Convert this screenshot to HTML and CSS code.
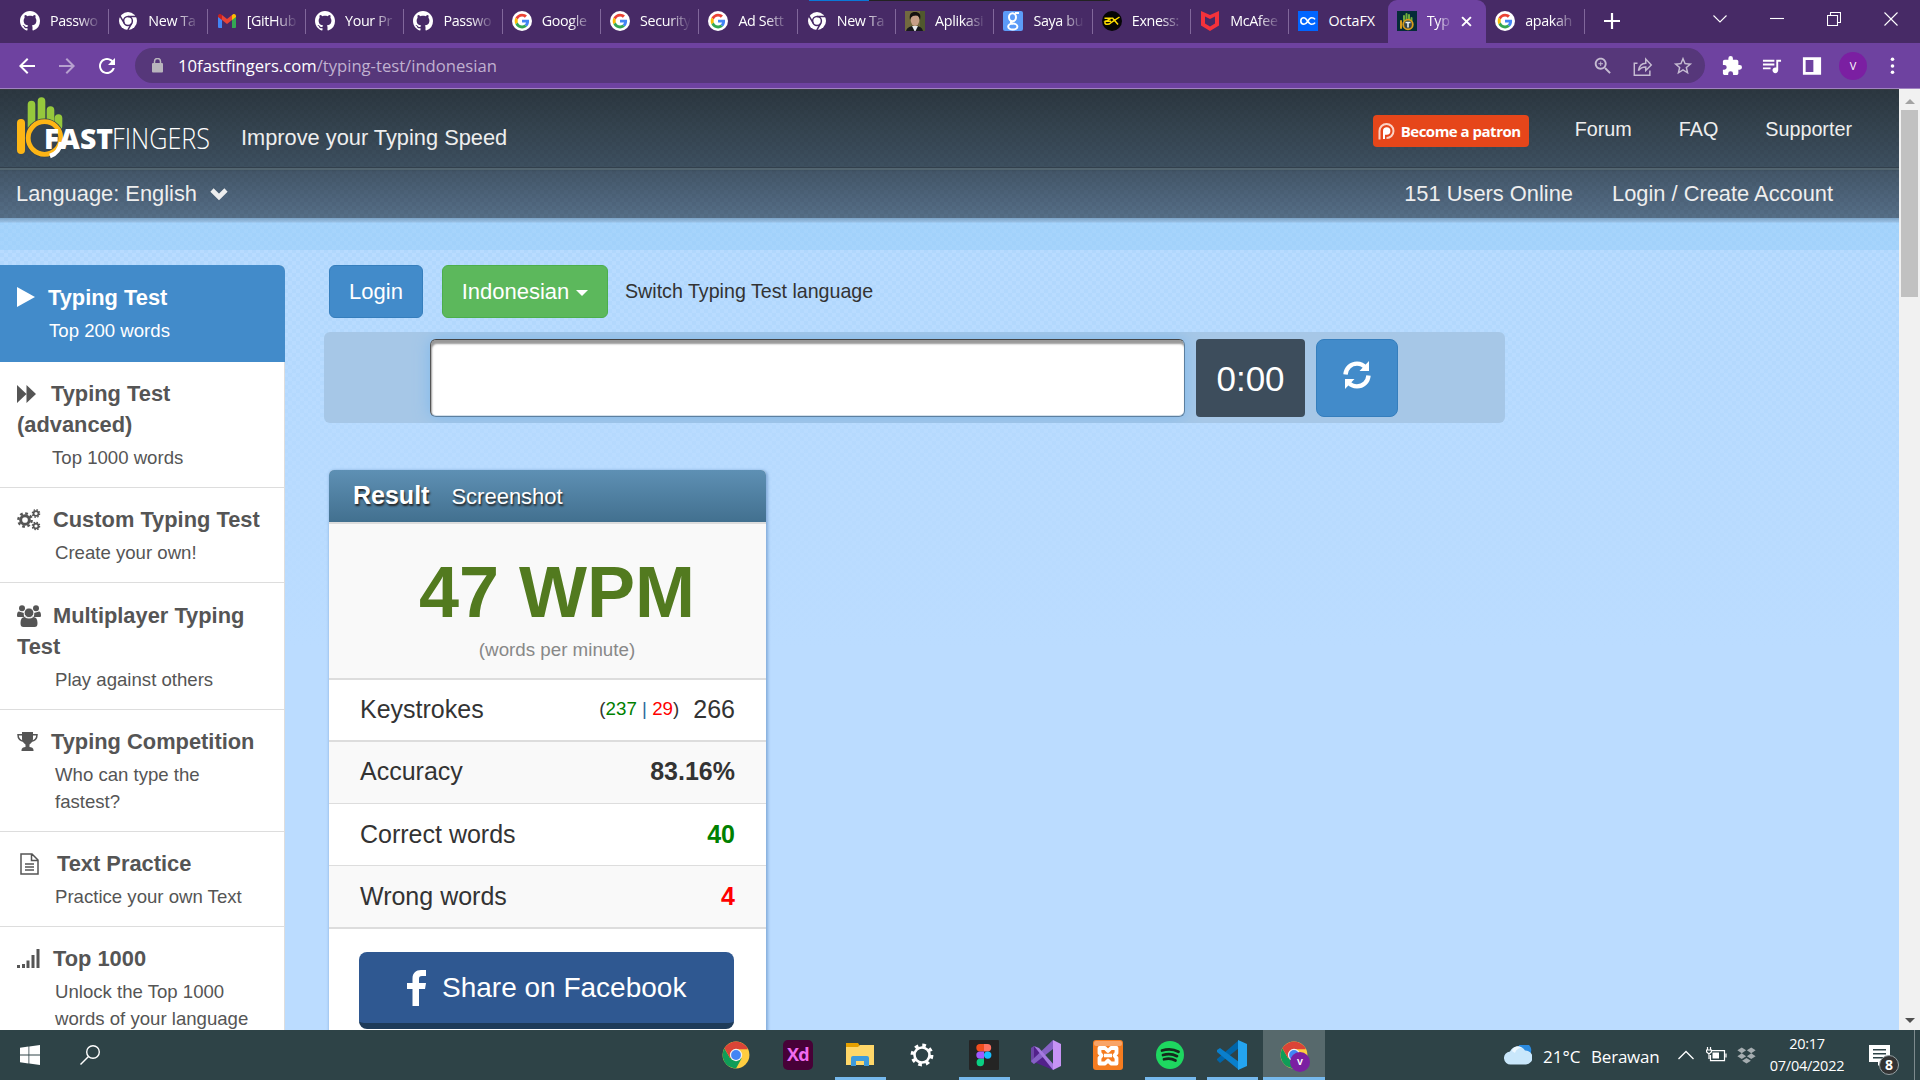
FILE: index.html
```html
<!DOCTYPE html>
<html lang="en">
<head>
<meta charset="utf-8">
<title>Typing Test</title>
<link rel="stylesheet" href="styles.css">
</head>
<body>
<svg class="defs" width="0" height="0">
  <symbol id="github" viewBox="0 0 16 16"><path fill="#fff" d="M8 0C3.58 0 0 3.58 0 8c0 3.54 2.29 6.53 5.47 7.59.4.07.55-.17.55-.38 0-.19-.01-.82-.01-1.49-2.01.37-2.53-.49-2.69-.94-.09-.23-.48-.94-.82-1.13-.28-.15-.68-.52-.01-.53.63-.01 1.08.58 1.23.82.72 1.21 1.87.87 2.33.66.07-.52.28-.87.51-1.07-1.78-.2-3.64-.89-3.64-3.95 0-.87.31-1.59.82-2.15-.08-.2-.36-1.02.08-2.12 0 0 .67-.21 2.2.82.64-.18 1.32-.27 2-.27.68 0 1.36.09 2 .27 1.53-1.04 2.2-.82 2.2-.82.44 1.1.16 1.92.08 2.12.51.56.82 1.27.82 2.15 0 3.07-1.87 3.75-3.65 3.95.29.25.54.73.54 1.48 0 1.07-.01 1.93-.01 2.2 0 .21.15.46.55.38A8.013 8.013 0 0 0 16 8c0-4.42-3.58-8-8-8z"/></symbol>
  <symbol id="chrome-mono" viewBox="0 0 20 20"><circle cx="10" cy="10" r="9" fill="#fff"/><g fill="none" stroke="#472a66" stroke-width="1.500"><circle cx="10" cy="10" r="4.400"/><path d="M10 5.600h8.500M6.200 12.200L2 4.900M13.800 12.200L9.800 19.200"/></g></symbol>
  <symbol id="chrome" viewBox="0 0 48 48"><circle cx="24" cy="24" r="23" fill="#ffcd40"/><path fill="#db4437" d="M24 24L4.100 12.500A23 23 0 0 1 43.900 12.500L43.900 14H24z"/><path fill="#0f9d58" d="M24 24L14 29.500 4.100 12.500A23 23 0 0 0 24 47L33.500 30z"/><path fill="#db4437" d="M4.100 12.500L14 29.500 24 24V13.500z"/><circle cx="24" cy="24" r="10.600" fill="#f1f1f1"/><circle cx="24" cy="24" r="8.400" fill="#4285f4"/></symbol>
  <symbol id="gmail" viewBox="0 0 20 20"><path fill="#4285f4" d="M1 5l4 3v9H2a1 1 0 0 1-1-1z"/><path fill="#34a853" d="M15 8l4-3v11a1 1 0 0 1-1 1h-3z"/><path fill="#ea4335" d="M5 4l5 4 5-4v5l-5 4-5-4z"/><path fill="#c5221f" d="M1 5c0-2 2-2.600 3.200-1.600L5 4v5L1 6z"/><path fill="#fbbc04" d="M19 5c0-2-2-2.600-3.200-1.600L15 4v5l4-3z"/></symbol>
  <symbol id="google" viewBox="0 0 60 60"><circle cx="30" cy="30" r="30" fill="#fff"/><g transform="translate(8 8) scale(.92)"><path fill="#EA4335" d="M24 9.500c3.540 0 6.710 1.220 9.210 3.600l6.850-6.850C35.900 2.380 30.470 0 24 0 14.620 0 6.510 5.380 2.560 13.220l7.980 6.190C12.430 13.720 17.740 9.500 24 9.500z"/><path fill="#4285F4" d="M46.980 24.550c0-1.570-.150-3.090-.380-4.550H24v9.020h12.940c-.580 2.960-2.260 5.480-4.780 7.180l7.730 6c4.510-4.180 7.090-10.360 7.090-17.650z"/><path fill="#FBBC05" d="M10.530 28.590c-.480-1.450-.760-2.990-.760-4.590s.270-3.140.760-4.590l-7.980-6.190C.920 16.460 0 20.120 0 24c0 3.880.920 7.540 2.560 10.780l7.970-6.190z"/><path fill="#34A853" d="M24 48c6.480 0 11.930-2.130 15.890-5.810l-7.730-6c-2.150 1.450-4.920 2.300-8.160 2.300-6.260 0-11.570-4.220-13.470-9.910l-7.980 6.190C6.510 42.620 14.620 48 24 48z"/></g></symbol>
  <symbol id="portrait" viewBox="0 0 20 20"><path fill="#72693f" d="M0 0h20v20H0z"/><path fill="#50582e" d="M15 0h5v20h-5z"/><path fill="#17181c" d="M1 20c1-4 5-5 9-5s7 1 8 5z"/><path fill="#e6e9ec" d="M7 15h6l-2.500 5h-1z"/><ellipse cx="10" cy="9" rx="4.300" ry="6" fill="#c8a088"/><path fill="#15120f" d="M5 9C4 3 6 1 10 1s6.500 2 5 8c-1-4-2-4-4-4.500C8 5 6 5 5 9z"/></symbol>
  <symbol id="gold-g" viewBox="0 0 20 20"><rect width="20" height="20" rx="2" fill="#5c9bf8"/><g fill="none" stroke="#fff" stroke-width="2"><ellipse cx="9.500" cy="6.200" rx="3.500" ry="4"/><ellipse cx="9.800" cy="15.600" rx="4.600" ry="3"/><path d="M12 2h4M9 10c-2 1-1 2 1 2.800"/></g></symbol>
  <symbol id="exness" viewBox="0 0 20 20"><circle cx="10" cy="10" r="10" fill="#050505"/><path fill="none" stroke="#ffde02" stroke-width="1.500" d="M2.500 7.300h6.500L4 10.300h5M3.500 9.700c-2.500 5 3.500 4 5.500 2l8.500-5.700M10.500 7l5.500 6.500"/></symbol>
  <symbol id="mcafee" viewBox="0 0 20 20"><path fill="#f5323b" fill-rule="evenodd" d="M1 0l9 4 9-4v14.500L10 20l-9-5.500zM5 5.500v7l5 3 5-3v-7l-5 2.500z"/></symbol>
  <symbol id="octa" viewBox="0 0 20 20"><path fill="#0165ff" d="M0 0h20v20H0z"/><path fill="none" stroke="#fff" stroke-width="1.600" d="M10 10c-2 3-3 3.200-4 3.200a3.200 3.200 0 0 1 0-6.400c3 0 4 6.400 7.500 6.400 1.600 0 3-.700 3.500-1.600M10 10c1.500-3 2.500-3.200 3.500-3.200 1.600 0 3 .700 3.500 1.600"/></symbol>
  <symbol id="tenff" viewBox="0 0 20 20"><path fill="#052c38" d="M0 0h20v20H0z"/><path fill="none" stroke="#6fae3c" stroke-width="2" stroke-linecap="round" d="M7 9V5M9.500 8V3M12 9V4M14.500 10V7"/><path fill="none" stroke="#d99c1a" stroke-width="2" stroke-linecap="round" d="M4 10v7"/><circle cx="11" cy="13.500" r="4.800" fill="#34454a" stroke="#d99c1a" stroke-width="1.800"/><path fill="none" stroke="#e8eef0" stroke-width="1.600" d="M8.500 11.500h5M11 11.500v5"/></symbol>
  <symbol id="cog" viewBox="0 0 24 24"><circle cx="12" cy="12" r="6.500" fill="none" stroke="currentColor" stroke-width="4.500"/><circle cx="12" cy="12" r="10" fill="none" stroke="currentColor" stroke-width="3.600" stroke-dasharray="4.100 3.754"/></symbol>
</svg>

<div class="browser">
  <div class="tabs">
    <div class="load-bar"></div>
    <div class="tab"><svg><use href="#github"/></svg><span>Passwo</span></div>
    <div class="tab"><svg><use href="#chrome-mono"/></svg><span>New Ta</span></div>
    <div class="tab"><svg><use href="#gmail"/></svg><span>[GitHub</span></div>
    <div class="tab"><svg><use href="#github"/></svg><span>Your Pr</span></div>
    <div class="tab"><svg><use href="#github"/></svg><span>Passwo</span></div>
    <div class="tab"><svg><use href="#google"/></svg><span>Google</span></div>
    <div class="tab"><svg><use href="#google"/></svg><span>Security</span></div>
    <div class="tab"><svg><use href="#google"/></svg><span>Ad Sett</span></div>
    <div class="tab"><svg><use href="#chrome-mono"/></svg><span>New Ta</span></div>
    <div class="tab"><svg><use href="#portrait"/></svg><span>Aplikasi</span></div>
    <div class="tab"><svg><use href="#gold-g"/></svg><span>Saya bu</span></div>
    <div class="tab"><svg><use href="#exness"/></svg><span>Exness:</span></div>
    <div class="tab"><svg><use href="#mcafee"/></svg><span>McAfee</span></div>
    <div class="tab last"><svg><use href="#octa"/></svg><span class="solid">OctaFX</span></div>
    <div class="tab active"><svg><use href="#tenff"/></svg><span>Typ</span>
      <svg class="close" viewBox="0 0 10 10"><path d="M1 1l8 8M9 1L1 9" stroke="#fff" stroke-width="1.800"/></svg></div>
    <div class="tab"><svg><use href="#google"/></svg><span>apakah</span></div>
    <svg class="plus" viewBox="0 0 16 16"><path d="M8 0v16M0 8h16" stroke="#fff" stroke-width="2.200"/></svg>
    <div class="window-buttons">
      <svg width="14" height="8" viewBox="0 0 14 8"><path d="M.5.5L7 7 13.500.5"/></svg>
      <svg width="14" height="8" viewBox="0 0 14 8"><path d="M0 3.500h14"/></svg>
      <svg width="14" height="14" viewBox="0 0 14 14"><path d="M.5 3.500h10v10H.5zM3.500 3.500v-3h10v10h-3"/></svg>
      <svg width="14" height="14" viewBox="0 0 14 14"><path d="M.5.5l13 13M13.500.5l-13 13"/></svg>
    </div>
  </div>
  <div class="toolbar">
    <svg class="nav-icon" viewBox="0 0 24 24"><path fill="#fff" d="M20 11H7.830l5.590-5.590L12 4l-8 8 8 8 1.410-1.410L7.830 13H20v-2z"/></svg>
    <svg class="nav-icon dim" viewBox="0 0 24 24"><path fill="#fff" d="M12 4l-1.410 1.410L16.170 11H4v2h12.170l-5.580 5.590L12 20l8-8z"/></svg>
    <svg class="nav-icon" viewBox="0 0 24 24"><path fill="#fff" d="M17.650 6.350C16.200 4.900 14.210 4 12 4c-4.420 0-7.990 3.580-7.990 8s3.570 8 7.990 8c3.730 0 6.840-2.550 7.730-6h-2.080c-.820 2.330-3.040 4-5.650 4-3.310 0-6-2.690-6-6s2.690-6 6-6c1.660 0 3.140.690 4.220 1.780L13 11h7V4l-2.350 2.350z"/></svg>
    <div class="address">
      <svg class="lock" viewBox="0 0 11 15"><rect y="5" width="11" height="9.500" rx="1" fill="#b9b5bd"/><path d="M2.500 6V3.500a3 3 0 0 1 6 0V6" fill="none" stroke="#b9b5bd" stroke-width="1.500"/></svg>
      <div class="url"><b>10fastfingers.com</b>/typing-test/indonesian</div>
      <svg class="omni" viewBox="0 0 24 24"><path fill="#c6bcd2" d="M15.500 14h-.790l-.280-.270C15.410 12.590 16 11.110 16 9.500 16 5.910 13.090 3 9.500 3S3 5.910 3 9.500 5.910 16 9.500 16c1.610 0 3.090-.590 4.230-1.570l.270.280v.790l5 4.990L20.490 19l-4.990-5zm-6 0C7.010 14 5 11.990 5 9.500S7.010 5 9.500 5 14 7.010 14 9.500 11.990 14 9.500 14zM10 7H9v2H7v1h2v2h1v-2h2V9h-2z"/></svg>
      <svg class="omni" viewBox="0 0 24 24"><path fill="none" stroke="#c6bcd2" stroke-width="1.600" d="M6 9H2.500v13h17v-5M7 17c1-6 4-8 8-8V4.500l6 6.500-6 6v-4c-4 0-6 1-8 4z"/></svg>
      <svg class="omni" viewBox="0 0 24 24"><path fill="#c6bcd2" d="M22 9.240l-7.190-.620L12 2 9.190 8.630 2 9.240l5.460 4.730L5.820 21 12 17.270 18.180 21l-1.630-7.030L22 9.240zM12 15.400l-3.760 2.270 1-4.280-3.320-2.880 4.380-.380L12 6.100l1.710 4.040 4.380.380-3.320 2.880 1 4.280L12 15.400z"/></svg>
    </div>
    <svg class="ext" viewBox="1 1 22 22"><path fill="#fff" d="M20.500 11H19V7c0-1.100-.900-2-2-2h-4V3.500a2.500 2.500 0 0 0-5 0V5H4c-1.100 0-2 .900-2 2v3.800h1.500a2.700 2.700 0 0 1 0 5.400H2V20c0 1.100.900 2 2 2h3.800v-1.500a2.700 2.700 0 0 1 5.400 0V22H17c1.100 0 2-.900 2-2v-4h1.500a2.500 2.500 0 0 0 0-5z"/></svg>
    <svg class="ext" viewBox="2 3 21 19"><path fill="#fff" d="M15 6H3v2h12V6zm0 4H3v2h12v-2zM3 16h8v-2H3v2zM17 6v8.180c-.310-.110-.650-.180-1-.180-1.660 0-3 1.340-3 3s1.340 3 3 3 3-1.340 3-3V8h3V6h-5z"/></svg>
    <svg class="ext" viewBox="1 2 22 21"><path fill="#fff" fill-rule="evenodd" d="M2 3h20v19H2zM5 6v13h8.500V6z"/></svg>
    <div class="avatar">V</div>
    <svg class="dots" viewBox="0 0 4 20"><g fill="#fff"><circle cx="2" cy="2.500" r="2"/><circle cx="2" cy="10" r="2"/><circle cx="2" cy="17" r="2"/></g></svg>
  </div>
</div>

<div class="viewport">
  <div class="page">
    <header class="top">
      <div class="brand-row">
        <svg class="logo" width="200" height="68" viewBox="12 92 200 68">
          <g stroke="#96c83c" stroke-width="7.600" stroke-linecap="round"><path d="M31.500 104.500V127M41.500 101V122M50.500 110v12M58.500 118v8"/></g>
          <circle cx="44.500" cy="138" r="19.500" fill="#34434f"/>
          <path d="M21 123v27" stroke="#fdb515" stroke-width="8" stroke-linecap="round"/>
          <circle cx="44.500" cy="138" r="16.300" fill="none" stroke="#fdb515" stroke-width="4.800"/>
          <path d="M61 142c-1 7-5 12-11 14" fill="none" stroke="#fff" stroke-width="4.500"/>
          <text x="44" y="148.500" class="fast" textLength="69" lengthAdjust="spacingAndGlyphs">FAST</text>
          <text x="112" y="148.500" class="fingers" textLength="98" lengthAdjust="spacingAndGlyphs">FINGERS</text>
        </svg>
        <div class="slogan">Improve your Typing Speed</div>
        <div class="patron"><svg width="17" height="18" viewBox="0 0 17 18"><path d="M1.500 17.500V9a7 7 0 1 1 7 7" fill="none" stroke="#fbd3c6" stroke-width="2"/><path d="M5 17V9a3.700 3.700 0 1 1 3.700 3.700H7V17z" fill="#fff"/></svg>Become a patron</div>
        <nav class="links"><a>Forum</a><a>FAQ</a><a>Supporter</a></nav>
      </div>
      <div class="user-row">
        <div class="language">Language: English<svg width="18" height="14" viewBox="0 0 18 14"><path d="M2 3l7 7 7-7" fill="none" stroke="#eee" stroke-width="4.600"/></svg></div>
        <div class="users">151 Users Online</div>
        <div>Login / Create Account</div>
      </div>
    </header>
    <div class="strip"></div>
    <div class="columns">
      <aside class="side">
        <div class="item current"><h4><svg width="18" height="20" viewBox="0 0 18 20"><path fill="#fff" d="M0 0l18 10L0 20z"/></svg>Typing Test</h4><p>Top 200 words</p></div>
        <div class="item h126"><h4><svg width="19" height="18" viewBox="0 0 19 18"><path fill="#555" d="M0 0l9.500 9V0l9.500 9-9.500 9V9L0 18z"/></svg>Typing Test (advanced)</h4><p>Top 1000 words</p></div>
        <div class="item h95"><h4><svg width="24" height="22" viewBox="0 0 24 22" color="#555"><use href="#cog" x="0" y="3" width="16" height="16"/><use href="#cog" x="14.500" y="0" width="9" height="9"/><use href="#cog" x="14.500" y="12.500" width="9" height="9"/></svg>Custom Typing Test</h4><p>Create your own!</p></div>
        <div class="item h127"><h4><svg width="24" height="22" viewBox="0 0 24 22"><g fill="#555"><circle cx="5" cy="3.200" r="3"/><circle cx="19" cy="3.200" r="3"/><path d="M0 11c0-3 .500-4.500 2-4.500L7 8c-.500 1-.200 3 .500 4H2c-1.500 0-2-.400-2-1zM24 11c0-3-.500-4.500-2-4.500L17 8c.500 1 .200 3-.500 4H22c1.500 0 2-.400 2-1z"/><circle cx="12" cy="7.800" r="4.800" stroke="#fff" stroke-width=".8"/><path d="M3.500 18c0-4 1.500-6 4-6 3 2 6 2 9 0 2.500 0 4 2 4 6 0 3-1 4-3 4h-11c-2 0-3-1-3-4z"/></g></svg>Multiplayer Typing Test</h4><p>Play against others</p></div>
        <div class="item h122"><h4><svg width="21" height="19" viewBox="0 0 21 19"><path fill="#555" d="M5 0h11v7c0 3-2 4-3.500 5.500V15c2 0 4 1 4 3v1h-12v-1c0-2 2-3 4-3v-2.500C7 11 5 10 5 7z"/><path fill="none" stroke="#555" stroke-width="1.500" d="M5 2.800H1c0 4 2 6 6 6.500M16 2.800h4c0 4-2 6-6 6.500"/></svg>Typing Competition</h4><p>Who can type the fastest?</p></div>
        <div class="item h95"><h4 class="text-practice"><svg width="19" height="22" viewBox="0 0 19 22"><path fill="none" stroke="#555" stroke-width="1.500" d="M1 1h11l6 6v14H1zM11.500 1v6.500H18M5 11h9M5 14h9M5 17h9"/></svg>Text Practice</h4><p>Practice your own Text</p></div>
        <div class="item"><h4><svg width="23" height="19" viewBox="0 0 23 19"><path fill="#555" d="M0 16h3v3H0zM5 15h3v4H5zM9.500 11.500h3V19h-3zM14.500 6h3v13h-3zM19.500 0h3v19h-3z"/></svg>Top 1000</h4><p>Unlock the Top 1000 words of your language</p></div>
      </aside>
      <main class="main">
        <div class="actions">
          <button class="btn blue">Login</button>
          <button class="btn green">Indonesian<i class="caret"></i></button>
          <span class="switch">Switch Typing Test language</span>
        </div>
        <div class="input-row">
          <div class="type-field"></div>
          <div class="timer">0:00</div>
          <button class="reload"><svg width="28" height="28" viewBox="0 0 28 28"><path fill="none" stroke="#fff" stroke-width="4.400" d="M2.500 13.500C3 7 8 2.600 14 2.600c3.500 0 6.500 1.500 8.500 4M25.500 14.500C25 21 20 25.400 14 25.400c-3.500 0-6.500-1.500-8.500-4"/><path fill="#fff" d="M26 0v10H16.500zM2 28V18h9.500z"/></svg></button>
        </div>
        <section class="result">
          <div class="result-head"><h3>Result</h3><span>Screenshot</span></div>
          <div class="wpm"><strong>47 WPM</strong><small>(words per minute)</small></div>
          <div class="row thick"><span>Keystrokes</span><span class="value"><small>(<i class="good">237</i> <i class="bar">|</i> <i class="bad">29</i>)</small>266</span></div>
          <div class="row shade accuracy"><span>Accuracy</span><strong>83.16%</strong></div>
          <div class="row"><span>Correct words</span><strong class="good">40</strong></div>
          <div class="row shade thick wrong"><span>Wrong words</span><strong class="bad">4</strong></div>
          <div class="share"><svg width="19" height="36" viewBox="0 0 19 36"><path fill="#fff" d="M19 0v6h-4c-2.500 0-3 1-3 3v4h7l-1 6h-6v17H5.500V19H0v-6h5.500V8.500C5.500 3 9 0 14 0z"/></svg>Share on Facebook</div>
        </section>
      </main>
    </div>
  </div>
  <div class="scrollbar"><i class="up"></i><div class="thumb"></div><i class="down"></i></div>
</div>

<div class="taskbar">
  <div class="start">
    <svg width="20" height="20" viewBox="0 0 20 20"><path fill="#fff" d="M0 2.800l8.500-1.200v8H0zM9.300 1.400L20 0v9.600H9.300zM0 10.400h8.500v8L0 17.200zM9.300 10.400H20V20L9.300 18.600z"/></svg>
    <svg width="20" height="20" viewBox="0 0 20 20"><g fill="none" stroke="#fff" stroke-width="1.400"><circle cx="13" cy="7" r="6.300"/><path d="M8.500 11.500L.5 19.500"/></g></svg>
  </div>
  <div class="apps">
    <div class="app"><svg width="28" height="28"><use href="#chrome"/></svg></div>
    <div class="app"><div class="xd">Xd</div></div>
    <div class="app open"><svg width="28" height="24" viewBox="0 0 28 24"><path fill="#e5a000" d="M0 0h12l2 3v4H0z"/><path fill="#ffd769" d="M0 4h12l2-2h14v20H0z"/><path fill="#3e9bdc" d="M5 23V15q0-2 2-2h14q2 0 2 2v8h-5v-5h-8v5z"/></svg></div>
    <div class="app"><svg width="24" height="24" viewBox="0 0 24 24"><circle cx="12" cy="12" r="7.500" fill="none" stroke="#fff" stroke-width="2.600"/><circle cx="12" cy="12" r="9.700" fill="none" stroke="#fff" stroke-width="3.400" stroke-dasharray="3.600 4.018"/></svg></div>
    <div class="app open"><svg width="30" height="30" viewBox="0 0 30 30"><rect width="30" height="30" rx="1" fill="#242424"/><path fill="#f24e1e" d="M15 4h-4a3.700 3.700 0 0 0 0 7.400h4z"/><path fill="#ff7262" d="M15 4h3.500a3.700 3.700 0 0 1 0 7.400H15z"/><path fill="#a259ff" d="M15 11.400h-4a3.700 3.700 0 0 0 0 7.400h4z"/><circle cx="18.700" cy="15.100" r="3.700" fill="#1abcfe"/><path fill="#0acf83" d="M11 18.800h4v3.700a3.700 3.700 0 1 1-4-3.700z"/></svg></div>
    <div class="app"><svg width="30" height="30" viewBox="0 0 30 30"><path fill="#52218a" d="M0 8l3-2 19 18v6L3 22l-3-2z"/><path fill="#6c47a5" d="M0 8l3-2v18l-3-2z"/><path fill="#8661c5" d="M3 24l-3-3L22 0v9z"/><path fill="#a67ae0" d="M3 6l5 2 16 18-2 4z"/><path fill="#c793f5" d="M22 0l8 4v22l-8 4z"/></svg></div>
    <div class="app"><svg width="30" height="30" viewBox="0 0 30 30"><rect width="30" height="30" rx="3" fill="#f57c20"/><rect x="1" y="1" width="28" height="5" rx="2" fill="#f9a467"/><path fill="none" stroke="#fff" stroke-width="3.800" stroke-linejoin="round" d="M6.500 8H12l3 3 3-3h5.500v5l-2 2.500 2 2.500v5.500H18l-3-3-3 3H6.500V18l2-2.500-2-2.500z"/><path stroke="#fff" stroke-width="3.600" d="M11 15.500h8"/></svg></div>
    <div class="app open"><svg width="28" height="28" viewBox="0 0 28 28"><circle cx="14" cy="14" r="14" fill="#1ed760"/><path fill="none" stroke="#152a1c" stroke-linecap="round" stroke-width="2.700" d="M6 9.500c6-1.800 12-1.200 16.500 1.300M7 14c5-1.500 10-1 14 1.200M8 18.300c4-1.200 8-.800 11.500 1.200"/></svg></div>
    <div class="app open"><svg width="30" height="30" viewBox="0 0 30 30"><path fill="#0065a9" d="M22 0v8L3 23l-3-3v-1z"/><path fill="#0a7fcc" d="M22 30v-8L3 8 0 10v2z"/><path fill="#24a4f0" d="M21 0l9 4v22l-9 4z"/></svg></div>
    <div class="app open focused"><svg width="28" height="28"><use href="#chrome"/></svg><b class="profile">V</b></div>
  </div>
  <div class="tray">
    <svg class="cloud" width="28" height="20" viewBox="0 0 28 20"><path fill="#2b8be0" d="M14 2a7 7 0 0 1 13 5v6H15z"/><path fill="#c9e7fb" d="M7 19.500a6.500 6.500 0 0 1-1-13A8.500 8.500 0 0 1 21 5.500a7 7 0 0 1 1 14z"/><path fill="#eef8ff" d="M8 6a6 6 0 0 1 10-3c-4 0-6 2-7 5z"/></svg>
    <span class="temp">21°C</span><span class="weather">Berawan</span>
    <svg class="chev" width="16" height="10" viewBox="0 0 16 10"><path d="M.5 9L8 1.500 15.500 9" fill="none" stroke="#fff" stroke-width="1.300"/></svg>
    <svg class="battery" width="21" height="16" viewBox="0 0 21 16"><path fill="none" stroke="#fff" stroke-width="1.200" d="M6 3.600h12.500v10H4.500V8M1.500 0v3M4.500 0v3M.6 3h4.800v2L3 7 .6 5zM3 7v5M20 6.500v4"/><path fill="#fff" d="M6.500 5.500H13v6H6.500z"/></svg>
    <svg class="dropbox" width="19" height="17" viewBox="0 0 20 17"><path fill="#a5adb0" d="M5 0l4.600 3L5 6 .4 3zM15 0l4.600 3L15 6l-4.600-3zM5 6.200l4.600 3-4.600 3-4.600-3zM15 6.200l4.600 3-4.600 3-4.600-3zM10 11l4.600 3-4.600 3-4.600-3z"/></svg>
    <div class="clock"><span>20:17</span><span>07/04/2022</span></div>
    <div class="notes"><svg width="21" height="21" viewBox="0 0 21 21"><path fill="#fff" d="M0 0h21v17h-8l-4 4v-4H0z"/><path stroke="#2e4347" stroke-width="1.400" d="M4 4.700h13M4 8.700h13M4 12.700h13"/></svg><b class="count">8</b></div>
    <div class="desktop-edge"></div>
  </div>
</div>
</body>
</html>
```
FILE: styles.css
```css
* { box-sizing: border-box; }
body { margin: 0; width: 1920px; height: 1080px; overflow: hidden; display: flex; flex-direction: column; font-family: "Liberation Sans", Arial, sans-serif; color: #333; }
h3, h4, p { margin: 0; }
i { font-style: normal; }
svg { flex: none; display: block; }
button { font-family: inherit; }
.defs { position: absolute; }

/* browser frame */
.browser { height: 89px; flex: none; background: #6e42a0; border-bottom: 1px solid #a183c1; font-family: "Open Sans", "Noto Sans", sans-serif; }
.tabs { height: 43px; background: #472a66; display: flex; position: relative; padding-left: 11px; }
.load-bar { position: absolute; top: 0; left: 809px; width: 301px; height: 1px; background: linear-gradient(90deg, #0a78d8 60px, #222 60px); }
.tab { width: 98.350px; height: 43px; flex: none; display: flex; align-items: center; gap: 10px; padding: 0 0 1px 9px; position: relative; }
.tab svg { width: 20px; height: 20px; }
.tab span { width: 54px; white-space: nowrap; color: #fff; font-size: 14.300px; line-height: 22px; letter-spacing: -.350px; -webkit-mask-image: linear-gradient(90deg, #000 28px, transparent 51px); mask-image: linear-gradient(90deg, #000 28px, transparent 51px); }
.tab span.solid { letter-spacing: 0; -webkit-mask-image: none; mask-image: none; }
.tab::after { content: ""; position: absolute; right: 0; top: 9px; width: 1px; height: 25px; background: #81679b; }
.tab.last::after, .tab.active::after { display: none; }
.tab.active { background: #6e42a0; border-radius: 9px 9px 0 0; }
.tab.active span { width: 24px; -webkit-mask-image: linear-gradient(90deg, #000 10px, transparent 26px); mask-image: linear-gradient(90deg, #000 10px, transparent 26px); }
.tab svg.close { width: 11px; height: 11px; }
.plus { width: 16px; height: 16px; margin: 13px 0 0 19px; }
.window-buttons { margin-left: auto; display: flex; gap: 43px; padding: 12px 22px 0 0; align-items: flex-start; }
.window-buttons svg { fill: none; stroke: #fff; stroke-width: 1.100; }
.window-buttons svg:nth-child(-n+2) { margin-top: 3px; }
.toolbar { height: 45px; display: flex; align-items: center; padding: 0 20px 0 15px; }
.nav-icon { width: 24px; height: 24px; margin-right: 16px; }
.dim { opacity: .5; }
.address { width: 1570px; height: 35px; border-radius: 18px; background: #56377a; display: flex; align-items: center; padding: 0 11px 0 17px; gap: 18px; }
.lock { width: 11px; height: 15px; margin-right: -3px; }
.url { flex: 1; color: #c0b1d0; font-size: 16.650px; white-space: nowrap; }
.url b { font-weight: 400; color: #fff; }
.omni { width: 22px; height: 22px; }
.ext { width: 20px; height: 22px; margin-left: 20px; }
.address + .ext { margin-left: 17px; }
.avatar { width: 28px; height: 28px; border-radius: 50%; background: #7b1fa2; color: #fff; font-size: 11px; text-align: center; line-height: 28px; margin-left: 17px; }
.dots { width: 5px; height: 18px; margin-left: 23px; }

/* site */
.viewport { height: 941px; flex: none; display: flex; }
.page { width: 1899px; height: 941px; overflow: hidden; background: linear-gradient(rgba(187,220,255,0), #bbdcff 560px), repeating-conic-gradient(rgba(130,190,240,.2) 0 25%, transparent 0 50%) 0 0 / 8px 8px, #b7dbff; }
.top { height: 129px; color: #eee; font-size: 22px; background: repeating-conic-gradient(rgba(0,0,0,.035) 0 25%, transparent 0 50%) 0 0 / 8px 8px, linear-gradient(#2c3740, #3e5161 80px, #44576a 82px, #566f88); border-top: 1px solid #353a40; }
.brand-row { height: 80px; display: flex; border-bottom: 2px solid #52646f; box-shadow: inset 0 -1px #32404c; }
.logo { margin: 2px 0 0 12px; }
.fast { font: 800 29px "Open Sans", sans-serif; fill: #fff; }
.fingers { font: 300 29px "Open Sans", sans-serif; fill: #fff; }
.slogan { margin: 35px 0 0 29px; line-height: 26px; font-size: 21.800px; }
.patron { margin: 25px 0 0 auto; width: 156px; height: 32px; border-radius: 4px; background: #e6461a; color: #fff; display: flex; align-items: center; gap: 6px; padding-left: 5px; font: 700 15px "Open Sans", sans-serif; letter-spacing: -.5px; white-space: nowrap; }
.links { display: flex; gap: 47px; margin: 27px 47px 0 46px; font-size: 19.750px; line-height: 24px; }
.user-row { height: 48px; display: flex; align-items: center; padding: 0 66px 0 16px; font-size: 21.850px; }
.language { display: flex; align-items: center; gap: 13px; margin-right: auto; }
.users { margin-right: 39px; }
.strip { height: 32px; background: linear-gradient(rgba(110,150,185,.8), rgba(125,165,200,.5) 4px, rgba(145,203,248,.45) 5px); }
.columns { display: flex; align-items: flex-start; padding-top: 15px; }
.side { width: 285px; background: #fff; border-right: 1px solid #ddd; border-radius: 0 6px 0 0; color: #555; }
.item { padding: 16px 20px 0 17px; border-bottom: 1px solid #ddd; }
.item h4 { font-size: 21.850px; line-height: 31px; }
.item h4 svg { display: inline-block; vertical-align: -2px; margin-right: 13px; }
.item h4 svg[height="22"] { vertical-align: -4px; margin-right: 12px; }
.item h4.text-practice svg { margin: 0 18px 0 3px; }
.item p { font-size: 18.600px; line-height: 27px; margin: 4px 0 0 38px; }
.item.current { height: 97px; background: #428bca; color: #fff; margin-right: -1px; border: 0; border-radius: 0 6px 0 0; padding-top: 17px; }
.current p { margin-left: 32px; }
.h126 { height: 126px; }
.h126 p { margin-left: 35px; }
.h95 { height: 95px; }
.h127 { height: 127px; padding-top: 17px; }
.h122 { height: 122px; }
.h126 h4 svg { margin-right: 15px; }
.main { margin-left: 39px; width: 1181px; }
.actions { display: flex; align-items: center; height: 53px; margin-left: 5px; }
.btn { height: 53px; border: 1px solid #357ebd; border-radius: 6px; color: #fff; font-size: 22px; padding: 1px 0 0; }
.blue { width: 94px; background: #428bca; }
.green { width: 166px; margin-left: 19px; background: #5cb85c; border-color: #4cae4c; }
.caret { display: inline-block; border: 6px solid transparent; border-top-color: #fff; border-bottom: 0; margin-left: 7px; vertical-align: 3px; }
.switch { margin-left: 17px; font-size: 19.650px; }
.input-row { height: 91px; margin-top: 14px; border-radius: 6px; background: #a6c7e7; display: flex; align-items: flex-start; padding: 7px 0 0 106px; overflow: hidden; }
.type-field { width: 755px; height: 78px; background: #fff; border: 1px solid #5c7f9f; border-top: 1px solid #444; border-left-color: #555; border-radius: 6px; box-shadow: inset 1px 4px 2px #999, inset 0 -1px #d4e0ea, 0 0 16px #7fb9ec; }
.timer { width: 109px; height: 78px; margin-left: 11px; background: #3d4d5c; border-radius: 4px; color: #fff; font-size: 35px; text-align: center; line-height: 79px; }
.reload { width: 82px; height: 78px; margin-left: 11px; padding: 0 0 7px; border: 1px solid #357ebd; border-radius: 8px; background: #428bca; display: flex; align-items: center; justify-content: center; }
.result { width: 437px; height: 620px; margin: 47px 0 0 5px; background: #fff; border-radius: 5px 5px 0 0; box-shadow: 1px 1px 3px 1px #86aedb; font-size: 25px; }
.result-head { height: 52px; background: linear-gradient(#5e90b4, #42708f); border-radius: 5px 5px 0 0; color: #fff; display: flex; align-items: baseline; padding: 11px 0 0 24px; gap: 22px; text-shadow: 1px 2px 2px #222; }
.result-head h3 { font-size: 25px; line-height: 28px; }
.result-head span { font-size: 22px; }
.wpm { height: 158px; border-top: 2px solid #ddd; border-bottom: 2px solid #ddd; background: #f9f9f9; display: flex; flex-direction: column; align-items: center; padding: 26px 0 0 19px; }
.wpm strong { font-size: 72px; line-height: 84px; color: #527a1f; }
.wpm small { font-size: 18.750px; line-height: 27px; margin-top: 2px; color: #888; }
.row { height: 62px; border-bottom: 1px solid #ddd; display: flex; justify-content: space-between; align-items: center; padding: 0 31px; }
.row.thick { border-bottom-width: 2px; padding-bottom: 1px; }
.accuracy { padding-bottom: 2px; }
.row.wrong { height: 63px; padding-bottom: 0; }
.shade { background: #f9f9f9; }
.value small { font-size: 18.750px; margin-right: 14px; vertical-align: 3px; }
.good { color: green; }
.bad { color: red; }
.bar { color: #2d6b9c; }
.share { width: 375px; height: 77px; margin: 23px 0 0 30px; background: #2f5891; border-bottom: 6px solid #1e3b59; border-radius: 8px; color: #fff; font-size: 28px; display: flex; align-items: center; gap: 16px; padding-left: 48px; }
.scrollbar { width: 21px; background: #f1f1f1; display: flex; flex-direction: column; align-items: center; padding: 10px 0 7px; }
.up, .down { border: 5px solid transparent; }
.up { border-bottom-color: #a3a3a3; border-top: 0; }
.down { border-top: 5px solid #505050; border-bottom: 0; margin-top: auto; }
.thumb { width: 17px; height: 187px; margin-top: 6px; background: #c1c1c1; }

/* taskbar */
.taskbar { height: 50px; flex: none; background: #2e4347; display: flex; color: #fff; font-family: "Open Sans", "Noto Sans", sans-serif; }
.start { width: 705px; display: flex; align-items: center; gap: 40px; padding-left: 20px; }
.apps { display: flex; }
.app { width: 62px; height: 50px; display: flex; align-items: center; justify-content: center; position: relative; }
.open::after { content: ""; position: absolute; left: 6px; right: 5px; bottom: 0; height: 3px; background: #76b9ed; }
.focused { background: #57696c; }
.focused::after { left: 0; right: 0; }
.xd { width: 30px; height: 30px; border-radius: 5px; background: #470137; color: #f06bf0; font-size: 18px; font-weight: 700; text-align: center; line-height: 29px; letter-spacing: -.8px; }
.profile { position: absolute; left: 27px; top: 22px; width: 20px; height: 20px; border-radius: 50%; background: #7b1fa2; font-size: 9px; line-height: 20px; text-align: center; }
.tray { margin-left: auto; width: 416px; display: flex; align-items: center; font-size: 17px; }
.temp { margin-left: 11px; width: 48px; padding-top: 2px; white-space: nowrap; }
.weather { width: 70px; padding-top: 2px; letter-spacing: -.2px; white-space: nowrap; }
.chev { margin-left: 17px; }
.battery { margin-left: 12px; }
.dropbox { margin-left: 10px; }
.clock { width: 78px; margin-left: 12px; display: flex; flex-direction: column; align-items: center; font-size: 14.500px; line-height: 22.500px; white-space: nowrap; letter-spacing: -.250px; }
.notes { position: relative; margin-left: 23px; }
.count { position: absolute; left: 10px; top: 10px; width: 20px; height: 20px; border: 1px solid #96a0a3; border-radius: 50%; background: #333; font-size: 14px; line-height: 18px; text-align: center; }
.desktop-edge { width: 1px; height: 50px; background: #7d8a8d; margin: 0 5px 0 auto; }
```
